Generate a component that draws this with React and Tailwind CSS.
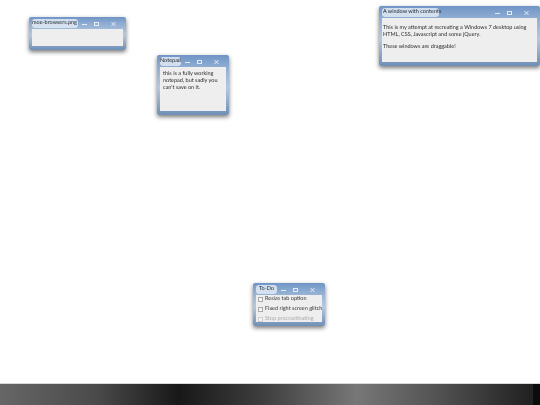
import React from "react";

function Controls() {
  return (
    <div className="flex h-[10px] w-[46px] shrink-0 items-center">
      <div className="flex w-[12px] items-center justify-center">
        <div className="mt-[2px] h-[1.5px] w-[5px] bg-[#e4ecf6]" />
      </div>
      <div className="flex w-[12px] items-center justify-center">
        <div className="h-[4px] w-[5px] border border-t-[1.5px] border-[#e4ecf6]" />
      </div>
      <div className="flex w-[22px] items-center justify-center">
        <svg width="5" height="4" viewBox="0 0 5 4" stroke="#e4ecf6" strokeWidth="1">
          <path d="M.5 0 4.5 4M4.5 0 .5 4" />
        </svg>
      </div>
    </div>
  );
}

function Win({ title, pos, titleW, children }) {
  return (
    <div className={"absolute flex flex-col rounded-[2px] bg-[linear-gradient(180deg,#6f94c6_0%,#8fadd2_20%,#b4c9e0_55%,#6f8fb6_100%)] px-[3px] pb-[4px] pt-px blur-[0.3px] shadow-[0_2px_4px_0_rgba(30,30,30,0.6)] [text-rendering:geometricPrecision] " + pos}>
      <div className="flex h-[11px] shrink-0 items-center justify-between">
        <div className={"h-[9px] shrink-0 whitespace-nowrap rounded-[3px] bg-[#e6edf5]/80 text-[5.5px] leading-[9px] text-[#1c2530] " + titleW}>{title}</div>
        <Controls />
      </div>
      <div className="flex-1 overflow-hidden bg-[#eeeeee] text-[#2a2a2a]">{children}</div>
    </div>
  );
}

function Todo({ text, muted }) {
  return (
    <div className="flex h-[10px] items-center gap-[2px] pl-[2px]">
      <div className={"h-[5px] w-[5px] shrink-0 border bg-[#f5f5f5] " + (muted ? "border-[#d0d0d0]" : "border-[#aaa]")} />
      <span className={"whitespace-nowrap text-[5.5px] " + (muted ? "text-[#aaa]" : "text-[#333]")}>{text}</span>
    </div>
  );
}

export default function App() {
  return (
    <div className="flex h-[405px] w-[540px] flex-col overflow-hidden bg-white font-['Lato','Noto_Sans',sans-serif]">
      <div className="relative flex-1">
        <Win title="moe-browsers.png" pos="left-[29px] top-[17px] h-[33px] w-[97px]" titleW="w-[46px]" />
        <Win title="Notepad" pos="left-[157px] top-[55px] h-[60px] w-[72px]" titleW="w-[21px]">
          <p className="px-[3px] pt-[4px] text-[5.5px] leading-[6.8px]">this is a fully working notepad, but sadly you can't save on it.</p>
        </Win>
        <Win title="A window with contents" pos="left-[379px] top-[6px] h-[60px] w-[161px]" titleW="w-[57px] pl-px">
          <div className="pl-px pt-[7px] text-[5.5px] leading-[6.8px]">
            <p>This is my attempt at recreating a Windows 7 desktop using HTML, CSS, Javascript and some jQuery.</p>
            <p className="mt-[5px]">These windows are draggable!</p>
          </div>
        </Win>
        <Win title="To-Do" pos="left-[253px] top-[283px] h-[43px] w-[72px]" titleW="w-[21px] text-center">
          <div className="-mt-px">
            <Todo text="Resize tab option" />
            <Todo text="Fixed right screen glitch" />
            <Todo text="Stop procrastinating" muted />
          </div>
        </Win>
      </div>
      <div className="flex h-[22px] shrink-0 justify-end border-t border-[#d8d8d8] bg-[linear-gradient(90deg,#666_0%,#4a4a4a_18%,#181818_33%,#3c3c3c_48%,#777_66%,#555_80%,#222_98%)]">
        <div className="w-[7px] bg-[#0c0c0c]" />
      </div>
    </div>
  );
}
